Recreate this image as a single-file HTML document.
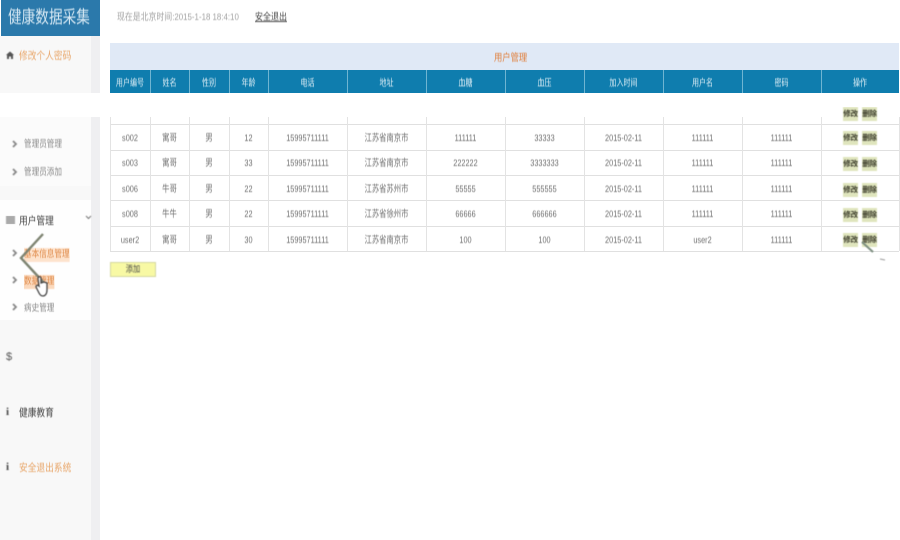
<!DOCTYPE html>
<html lang="zh">
<head>
<meta charset="utf-8">
<title>健康数据采集</title>
<style>
html,body{margin:0;padding:0;background:#fff;}
body{width:900px;height:540px;overflow:hidden;position:relative;font-family:"Liberation Sans","Noto Sans CJK SC",sans-serif;}
.a{position:absolute;white-space:nowrap;}
.b{filter:blur(.45px);}
.c{text-align:center;}
.t{font-size:9.5px;color:#6e6e6e;line-height:25px;height:25px;transform:scaleX(.77);margin-top:1px;}
.h{font-size:9.5px;color:#dcedf5;line-height:28px;height:23px;top:70px;transform:scaleX(.74);}
.v{position:absolute;width:1px;background:#e3e3e3;top:117px;height:134px;}
.hv{position:absolute;width:1px;background:#6fb5d2;top:70px;height:23px;}
.r{position:absolute;left:110px;width:789px;height:1px;background:#e0e0e0;}
.btn{position:absolute;width:15px;height:14px;background:#dfe5bd;font-size:7.5px;line-height:14px;text-align:center;color:#3a3a2a;overflow:hidden;white-space:nowrap;letter-spacing:-.3px;font-weight:bold;}
.m{font-size:9.5px;color:#8a8a8a;line-height:14px;transform:scaleX(.8);transform-origin:0 50%;margin-top:1px;}
.n{font-size:10.5px;line-height:15px;transform:scaleX(.83);transform-origin:0 50%;margin-top:1px;}
.ar{width:6px;height:8px;}
</style>
</head>
<body>
<!-- sidebar -->
<div class="a" style="left:0;top:36px;width:91px;height:504px;background:#f8f8f8;"></div>
<div class="a" style="left:91px;top:36px;width:9px;height:504px;background:#efeff1;"></div>
<div class="a" style="left:0;top:116px;width:91px;height:70px;background:#fbfbfb;"></div>
<div class="a" style="left:0;top:200px;width:91px;height:120px;background:#fefefe;"></div>
<div class="a" style="left:1px;top:0;width:99px;height:36px;background:#2b79ab;"></div>
<div class="a b" style="left:8px;top:4px;font-size:17.5px;line-height:26px;color:#d6e8f3;transform:scaleX(.78);transform-origin:0 50%;">健康数据采集</div>

<div class="a b" style="left:117px;top:10px;font-size:9.5px;line-height:16px;color:#a2a2a2;transform:scaleX(.83);transform-origin:0 50%;">现在是北京时间:2015-1-18 18:4:10</div>
<div class="a b" style="left:255px;top:10px;font-size:9.5px;line-height:16px;color:#444;text-decoration:underline;transform:scaleX(.84);transform-origin:0 50%;">安全退出</div>

<!-- sidebar items -->
<svg class="a b" style="left:6px;top:51px;" width="8" height="8" viewBox="0 0 8 8"><path d="M0 4 L4 .5 L8 4 L7 4 L7 8 L5 8 L5 5.5 L3 5.5 L3 8 L1 8 L1 4 Z" fill="#555"/></svg>
<div class="a b n" style="left:19px;top:48px;color:#e8a568;">修改个人密码</div>

<svg class="a b ar" style="left:12px;top:140px;" viewBox="0 0 6 8"><path d="M1 1 L4 4 L1 7" stroke="#888" stroke-width="1.8" fill="none"/></svg>
<div class="a b m" style="left:24px;top:137px;">管理员管理</div>
<svg class="a b ar" style="left:12px;top:168px;" viewBox="0 0 6 8"><path d="M1 1 L4 4 L1 7" stroke="#888" stroke-width="1.8" fill="none"/></svg>
<div class="a b m" style="left:24px;top:165px;">管理员添加</div>

<svg class="a b" style="left:6px;top:216px;" width="9" height="8" viewBox="0 0 9 8"><path d="M0 1H9M0 3H9M0 5H9M0 7H9" stroke="#555" stroke-width="1"/></svg>
<div class="a b n" style="left:19px;top:213px;color:#444;">用户管理</div>
<svg class="a b" style="left:85px;top:215px;" width="7" height="5" viewBox="0 0 7 5"><path d="M1 1 L3.5 3.5 L6 1" stroke="#777" fill="none"/></svg>

<svg class="a b ar" style="left:12px;top:249px;" viewBox="0 0 6 8"><path d="M1 1 L4 4 L1 7" stroke="#888" stroke-width="1.8" fill="none"/></svg>
<div class="a b m" style="left:24px;top:247px;color:#e08c4c;background:#fde3cd;">基本信息管理</div>
<svg class="a b ar" style="left:12px;top:276px;" viewBox="0 0 6 8"><path d="M1 1 L4 4 L1 7" stroke="#888" stroke-width="1.8" fill="none"/></svg>
<div class="a b m" style="left:24px;top:274px;color:#e08c4c;background:#fbd9bd;">数据管理</div>
<svg class="a b ar" style="left:12px;top:303px;" viewBox="0 0 6 8"><path d="M1 1 L4 4 L1 7" stroke="#888" stroke-width="1.8" fill="none"/></svg>
<div class="a b m" style="left:24px;top:301px;">病史管理</div>

<svg class="a b" style="left:15px;top:232px;" width="40" height="66" viewBox="0 0 40 66"><path d="M28 2 L6 26 L30 52" stroke="#7d8371" stroke-width="2.4" fill="none"/><path d="M23 47 C23 44 26 44 26 47 L26 51 L29 50 L32 51 L32 58 C32 62 30 64 28 64 C26 64 25 63 24 61 L21 55 C21 53 23 53 24 54 Z" fill="#fff" stroke="#444" stroke-width="1.3"/></svg>

<div class="a b" style="left:6px;top:350px;font-size:11px;line-height:15px;color:#555;">$</div>
<div class="a b" style="left:6px;top:405px;font-family:'Liberation Serif',serif;font-weight:bold;font-size:11px;line-height:15px;color:#444;">i</div>
<div class="a b n" style="left:19px;top:405px;color:#444;">健康教育</div>
<div class="a b" style="left:6px;top:460px;font-family:'Liberation Serif',serif;font-weight:bold;font-size:11px;line-height:15px;color:#444;">i</div>
<div class="a b n" style="left:19px;top:460px;color:#e8a568;">安全退出系统</div>

<!-- table top -->
<div class="a" style="left:110px;top:43px;width:789px;height:27px;background:#e0e9f6;"></div>
<div class="a b" style="left:494px;top:51px;font-size:10px;line-height:15px;color:#e0803e;transform:scaleX(.83);transform-origin:0 50%;">用户管理</div>
<div class="a" style="left:110px;top:70px;width:789px;height:23px;background:#0f7dae;"></div>

<div class="hv" style="left:150px"></div><div class="hv" style="left:189px"></div><div class="hv" style="left:229px"></div><div class="hv" style="left:268px"></div><div class="hv" style="left:347px"></div><div class="hv" style="left:426px"></div><div class="hv" style="left:505px"></div><div class="hv" style="left:584px"></div><div class="hv" style="left:663px"></div><div class="hv" style="left:742px"></div><div class="hv" style="left:821px"></div>

<div class="a c h b" style="left:110px;width:40px;">用户编号</div>
<div class="a c h b" style="left:150px;width:39px;">姓名</div>
<div class="a c h b" style="left:189px;width:40px;">性别</div>
<div class="a c h b" style="left:229px;width:39px;">年龄</div>
<div class="a c h b" style="left:268px;width:79px;">电话</div>
<div class="a c h b" style="left:347px;width:79px;">地址</div>
<div class="a c h b" style="left:426px;width:79px;">血糖</div>
<div class="a c h b" style="left:505px;width:79px;">血压</div>
<div class="a c h b" style="left:584px;width:79px;">加入时间</div>
<div class="a c h b" style="left:663px;width:79px;">用户名</div>
<div class="a c h b" style="left:742px;width:79px;">密码</div>
<div class="a c h b" style="left:821px;width:78px;">操作</div>

<!-- grid -->
<div class="r" style="top:124px"></div><div class="r" style="top:150px"></div><div class="r" style="top:175px"></div><div class="r" style="top:200px"></div><div class="r" style="top:226px"></div><div class="r" style="top:251px"></div>
<div class="v" style="left:110px"></div><div class="v" style="left:150px"></div><div class="v" style="left:189px"></div><div class="v" style="left:229px"></div><div class="v" style="left:268px"></div><div class="v" style="left:347px"></div><div class="v" style="left:426px"></div><div class="v" style="left:505px"></div><div class="v" style="left:584px"></div><div class="v" style="left:663px"></div><div class="v" style="left:742px"></div><div class="v" style="left:821px"></div><div class="v" style="left:899px"></div>

<!-- row 1 -->
<div class="a c t b" style="left:110px;width:40px;top:125px;">s002</div><div class="a c t b" style="left:150px;width:39px;top:125px;">寓哥</div><div class="a c t b" style="left:189px;width:40px;top:125px;">男</div><div class="a c t b" style="left:229px;width:39px;top:125px;">12</div><div class="a c t b" style="left:268px;width:79px;top:125px;">15995711111</div><div class="a c t b" style="left:347px;width:79px;top:125px;">江苏省南京市</div><div class="a c t b" style="left:426px;width:79px;top:125px;">111111</div><div class="a c t b" style="left:505px;width:79px;top:125px;">33333</div><div class="a c t b" style="left:584px;width:79px;top:125px;">2015-02-11</div><div class="a c t b" style="left:663px;width:79px;top:125px;">111111</div><div class="a c t b" style="left:742px;width:79px;top:125px;">111111</div>
<!-- row 2 -->
<div class="a c t b" style="left:110px;width:40px;top:150px;">s003</div><div class="a c t b" style="left:150px;width:39px;top:150px;">寓哥</div><div class="a c t b" style="left:189px;width:40px;top:150px;">男</div><div class="a c t b" style="left:229px;width:39px;top:150px;">33</div><div class="a c t b" style="left:268px;width:79px;top:150px;">15995711111</div><div class="a c t b" style="left:347px;width:79px;top:150px;">江苏省南京市</div><div class="a c t b" style="left:426px;width:79px;top:150px;">222222</div><div class="a c t b" style="left:505px;width:79px;top:150px;">3333333</div><div class="a c t b" style="left:584px;width:79px;top:150px;">2015-02-11</div><div class="a c t b" style="left:663px;width:79px;top:150px;">111111</div><div class="a c t b" style="left:742px;width:79px;top:150px;">111111</div>
<!-- row 3 -->
<div class="a c t b" style="left:110px;width:40px;top:176px;">s006</div><div class="a c t b" style="left:150px;width:39px;top:176px;">牛哥</div><div class="a c t b" style="left:189px;width:40px;top:176px;">男</div><div class="a c t b" style="left:229px;width:39px;top:176px;">22</div><div class="a c t b" style="left:268px;width:79px;top:176px;">15995711111</div><div class="a c t b" style="left:347px;width:79px;top:176px;">江苏省苏州市</div><div class="a c t b" style="left:426px;width:79px;top:176px;">55555</div><div class="a c t b" style="left:505px;width:79px;top:176px;">555555</div><div class="a c t b" style="left:584px;width:79px;top:176px;">2015-02-11</div><div class="a c t b" style="left:663px;width:79px;top:176px;">111111</div><div class="a c t b" style="left:742px;width:79px;top:176px;">111111</div>
<!-- row 4 -->
<div class="a c t b" style="left:110px;width:40px;top:201px;">s008</div><div class="a c t b" style="left:150px;width:39px;top:201px;">牛牛</div><div class="a c t b" style="left:189px;width:40px;top:201px;">男</div><div class="a c t b" style="left:229px;width:39px;top:201px;">22</div><div class="a c t b" style="left:268px;width:79px;top:201px;">15995711111</div><div class="a c t b" style="left:347px;width:79px;top:201px;">江苏省徐州市</div><div class="a c t b" style="left:426px;width:79px;top:201px;">66666</div><div class="a c t b" style="left:505px;width:79px;top:201px;">666666</div><div class="a c t b" style="left:584px;width:79px;top:201px;">2015-02-11</div><div class="a c t b" style="left:663px;width:79px;top:201px;">111111</div><div class="a c t b" style="left:742px;width:79px;top:201px;">111111</div>
<!-- row 5 -->
<div class="a c t b" style="left:110px;width:40px;top:227px;">user2</div><div class="a c t b" style="left:150px;width:39px;top:227px;">寓哥</div><div class="a c t b" style="left:189px;width:40px;top:227px;">男</div><div class="a c t b" style="left:229px;width:39px;top:227px;">30</div><div class="a c t b" style="left:268px;width:79px;top:227px;">15995711111</div><div class="a c t b" style="left:347px;width:79px;top:227px;">江苏省南京市</div><div class="a c t b" style="left:426px;width:79px;top:227px;">100</div><div class="a c t b" style="left:505px;width:79px;top:227px;">100</div><div class="a c t b" style="left:584px;width:79px;top:227px;">2015-02-11</div><div class="a c t b" style="left:663px;width:79px;top:227px;">user2</div><div class="a c t b" style="left:742px;width:79px;top:227px;">111111</div>

<!-- buttons -->
<div class="btn b" style="left:843px;top:107px;">修改</div><div class="btn b" style="left:862px;top:107px;">删除</div>
<div class="btn b" style="left:843px;top:131px;">修改</div><div class="btn b" style="left:862px;top:131px;">删除</div>
<div class="btn b" style="left:843px;top:157px;">修改</div><div class="btn b" style="left:862px;top:157px;">删除</div>
<div class="btn b" style="left:843px;top:183px;">修改</div><div class="btn b" style="left:862px;top:183px;">删除</div>
<div class="btn b" style="left:843px;top:208px;">修改</div><div class="btn b" style="left:862px;top:208px;">删除</div>
<div class="btn b" style="left:843px;top:233px;">修改</div><div class="btn b" style="left:862px;top:233px;">删除</div>
<svg class="a b" style="left:860px;top:240px;" width="30" height="24" viewBox="0 0 30 24"><path d="M2 2 L13 12" stroke="#7d8f80" stroke-width="2" fill="none"/><path d="M20 19 L25 20" stroke="#999" stroke-width="1"/></svg>

<!-- white overlay band -->
<div class="a" style="left:0;top:93px;width:842px;height:24px;background:#fff;"></div>
<div class="a" style="left:842px;top:93px;width:58px;height:14px;background:#fff;"></div>

<!-- add button -->
<div class="a b c" style="left:110px;top:262px;width:44px;height:13px;background:#f8f9a4;border:1px solid #d5d8a0;font-size:9px;line-height:12px;color:#444;"><span style="display:inline-block;transform:scaleX(.8);">添加</span></div>
</body>
</html>
